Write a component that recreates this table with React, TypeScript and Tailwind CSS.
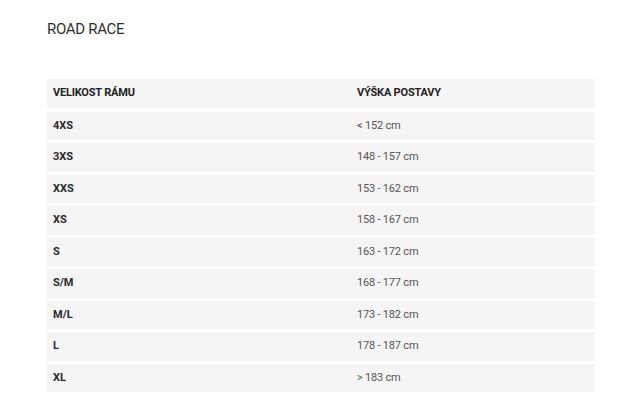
import React from 'react';

const rows: [string, string][] = [
  ['4XS', '< 152 cm'],
  ['3XS', '148 - 157 cm'],
  ['XXS', '153 - 162 cm'],
  ['XS', '158 - 167 cm'],
  ['S', '163 - 172 cm'],
  ['S/M', '168 - 177 cm'],
  ['M/L', '173 - 182 cm'],
  ['L', '178 - 187 cm'],
  ['XL', '> 183 cm'],
];

const App: React.FC = () => {
  return (
    <div className="w-[630px] h-[420px] bg-white pl-[47px] pt-[20px] font-['Roboto',sans-serif]">
      {/* Title */}
      <div className="text-[15px] leading-[18px] text-[#2e2e2e] tracking-[-0.3px]">ROAD RACE</div>

      {/* Size table */}
      <div className="mt-[41px] w-[548px] flex flex-col gap-[3.5px]">
        <div className="grid grid-cols-[304px_1fr] h-[29px] items-center bg-[#f5f5f5] text-[11px] font-bold text-[#222] tracking-[-0.2px]">
          <div className="pl-[6px]">VELIKOST RÁMU</div>
          <div className="pl-[6px]">VÝŠKA POSTAVY</div>
        </div>
        <div className="flex flex-col gap-[3px]">
          {rows.map(([size, height]) => (
            <div
              key={size}
              className="grid grid-cols-[304px_1fr] h-[28.5px] items-center bg-[#f5f5f5] text-[11px]"
            >
              <div className="pl-[6px] font-bold text-[#2a2a2a]">{size}</div>
              <div className="pl-[6px] text-[#555] tracking-[-0.2px]">{height}</div>
            </div>
          ))}
        </div>
      </div>
    </div>
  );
};

export default App;
